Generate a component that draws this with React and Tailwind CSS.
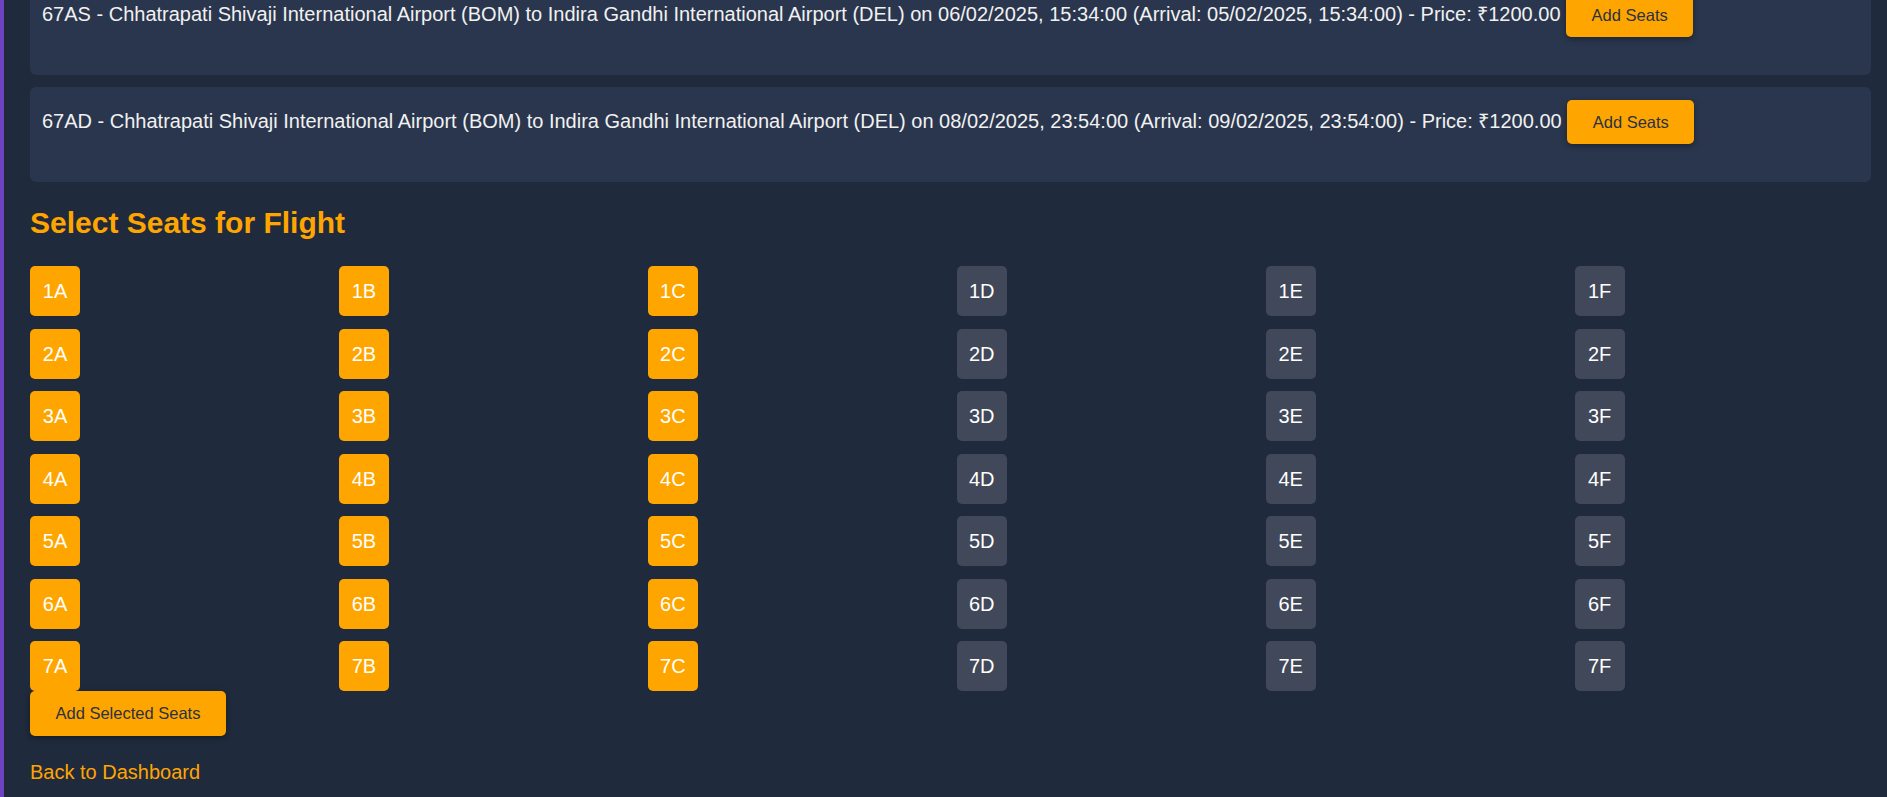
import { useState } from "react"

const flights = [
  {
    id: "67AS",
    text: "67AS - Chhatrapati Shivaji International Airport (BOM) to Indira Gandhi International Airport (DEL) on 06/02/2025, 15:34:00 (Arrival: 05/02/2025, 15:34:00) - Price: ₹1200.00",
  },
  {
    id: "67AD",
    text: "67AD - Chhatrapati Shivaji International Airport (BOM) to Indira Gandhi International Airport (DEL) on 08/02/2025, 23:54:00 (Arrival: 09/02/2025, 23:54:00) - Price: ₹1200.00",
  },
]

const rows = [1, 2, 3, 4, 5, 6, 7]
const cols = ["A", "B", "C", "D", "E", "F"]

export default function App() {
  // A, B and C are picked in the screenshot
  const [selected, setSelected] = useState(() => {
    const s = {}
    rows.forEach((r) => ["A", "B", "C"].forEach((c) => (s[`${r}${c}`] = true)))
    return s
  })

  const toggle = (seat) => setSelected({ ...selected, [seat]: !selected[seat] })

  return (
    <div className="h-[797px] overflow-hidden bg-[#1f2a3c] border-l-4 border-[#6f42c1] pl-[26px] pr-[16px] font-['Liberation_Sans',Arial,sans-serif] text-[#f1f1f1]">
      {/* Flights list (page is scrolled down a bit) */}
      <div className="-mt-[20px] space-y-[12px]">
        {flights.map((f) => (
          <div key={f.id} className="h-[95px] bg-[#2a364d] rounded-[6px] px-[12px] pt-[13px] text-[20px]">
            {f.text}{" "}
            <button className="inline-block align-baseline bg-[#ffa500] text-[#2a3242] text-[16.5px] px-[25.5px] h-[44px] rounded-[5px] shadow-[0_2px_6px_rgba(0,0,0,0.35)]">
              Add Seats
            </button>
          </div>
        ))}
      </div>

      <h2 className="mt-[24px] text-[30px] leading-[34px] font-bold text-[#ffa500]">Select Seats for Flight</h2>

      {/* Seat map */}
      <div className="mt-[26px] grid grid-cols-6 gap-[12.5px]">
        {rows.map((r) =>
          cols.map((c) => {
            const seat = `${r}${c}`
            return (
              <div key={seat}>
                <button
                  onClick={() => toggle(seat)}
                  className={`w-[50px] h-[50px] rounded-[5px] text-[20px] text-white flex items-center justify-center ${
                    selected[seat] ? "bg-[#ffa500]" : "bg-[#414859]"
                  }`}
                >
                  {seat}
                </button>
              </div>
            )
          })
        )}
      </div>

      <button className="block bg-[#ffa500] text-[#2a3242] text-[16.5px] px-[25.5px] h-[45px] rounded-[5px] shadow-[0_2px_6px_rgba(0,0,0,0.35)]">
        Add Selected Seats
      </button>

      <a href="#" className="block mt-[21px] text-[20px] text-[#ffa500]">
        Back to Dashboard
      </a>
    </div>
  )
}
